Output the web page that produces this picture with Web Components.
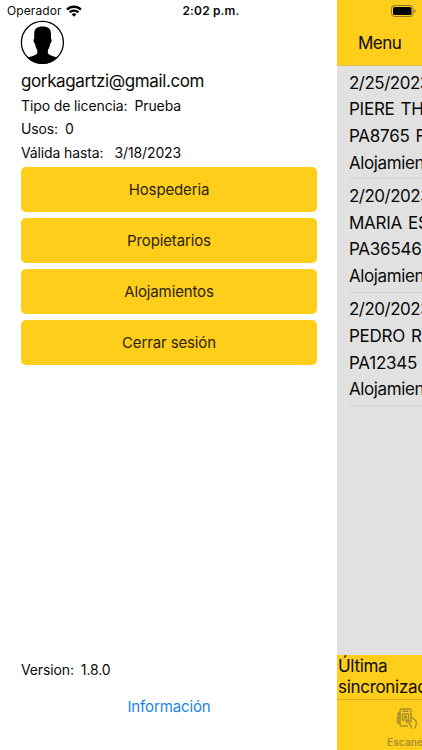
<!DOCTYPE html>
<html lang="es">
<head>
<meta charset="utf-8">
<title>Hospederia</title>
<style>
  :root {
    --accent: #ffce1b;
    --link: #1a82e6;
    --dim: #e1e1e1;
  }
  html, body {
    margin: 0;
    height: 100%;
    overflow: hidden;
    background: #fff;
    color: #0a0a0a;
    font-family: Inter, "Liberation Sans", sans-serif;
  }
</style>
</head>
<body>
<app-shell>
  <status-bar slot="status" carrier="Operador" time="2:02 p.m."></status-bar>
  <side-drawer slot="drawer">
    <user-avatar slot="profile"></user-avatar>
    <license-info slot="profile" email="gorkagartzi@gmail.com" type="Prueba" uses="0" until="3/18/2023"></license-info>
    <drawer-button>Hospederia</drawer-button>
    <drawer-button>Propietarios</drawer-button>
    <drawer-button>Alojamientos</drawer-button>
    <drawer-button>Cerrar sesión</drawer-button>
    <span slot="version">1.8.0</span>
    <span slot="link">Información</span>
  </side-drawer>
  <guest-page heading="Menu">
    <guest-entry date="2/25/2023" name="PIERE TH" doc="PA8765 F" place="Alojamiento"></guest-entry>
    <guest-entry date="2/20/2023" name="MARIA ES" doc="PA36546" place="Alojamiento"></guest-entry>
    <guest-entry date="2/20/2023" name="PEDRO R" doc="PA12345" place="Alojamiento"></guest-entry>
    <scan-tab slot="tab">Escanear</scan-tab>
  </guest-page>
</app-shell>

<script>
/** <app-shell> — drawer pushed in from the left, page cut off at the right edge */
class AppShell extends HTMLElement {
  connectedCallback() {
    this.attachShadow({ mode: "open" }).innerHTML = `
      <style>
        :host { display: grid; grid-template-columns: 337px 85px; height: 750px; width: 422px; position: relative; overflow: hidden; }
        /* the status bar floats over both columns */
        ::slotted(status-bar) { position: absolute; top: 0; left: 0; right: 0; z-index: 2; }
      </style>
      <slot name="status"></slot>
      <slot name="drawer"></slot>
      <slot></slot>
    `;
  }
}

class StatusBar extends HTMLElement {
  connectedCallback() {
    this.attachShadow({ mode: "open" }).innerHTML = `
      <style>
        :host { display: grid; grid-template-columns: 1fr auto 1fr; align-items: center; height: 22px; padding: 0 7px; font-size: 12px; line-height: 22px; }
        .left { display: flex; align-items: center; gap: 4px; letter-spacing: 0.1px; }
        .time { font-weight: 600; letter-spacing: 0.15px; }
        .right { display: flex; justify-content: flex-end; margin-right: -7px; padding-right: 5px; }
        svg { display: block; }
      </style>
      <div class="left">
        <span>${this.getAttribute("carrier")}</span>
        <svg width="16" height="12" viewBox="0 0 16 12" fill="none" stroke="#000" stroke-width="2.4">
          <path d="M1.1 4.6a9.9 9.9 0 0 1 13.8 0M3.7 7.4a6.2 6.2 0 0 1 8.6 0"/>
          <path d="M8 11.8 5.6 9.3a3.5 3.5 0 0 1 4.8 0z" fill="#000" stroke="none"/>
        </svg>
      </div>
      <span class="time">${this.getAttribute("time")}</span>
      <div class="right">
        <svg width="26" height="12" viewBox="0 0 26 12">
          <rect x=".5" y=".5" width="21.5" height="11" rx="3" fill="none" stroke="#8f7723"/>
          <rect x="2" y="2" width="18.5" height="8" rx="1.5"/>
          <path d="M23.4 4v4q1.2-.6 1.2-2t-1.2-2" fill="#8f7723"/>
        </svg>
      </div>
    `;
  }
}

class UserAvatar extends HTMLElement {
  connectedCallback() {
    this.attachShadow({ mode: "open" }).innerHTML = `
      <style>
        :host { display: block; width: 44px; height: 44px; margin-left: -1px; }
        svg { display: block; }
      </style>
      <svg width="45" height="45" viewBox="0 0 45 45">
        <circle cx="22.4" cy="22.4" r="21" fill="#fff" stroke="#000" stroke-width="1.3"/>
        <path d="M22.6 6.600c5.600 0 8.400 1.800 8.400 7.800v4.400c1.200.4.700 4-.8 5-.5 2.800-1.100 4.700-2.300 6.200v3.500c2.400 2.600 6.400 2.600 9.300 4.300a21 21 0 0 1-29.600 0c2.900-1.700 7.300-1.700 9.700-4.300V30c-1.200-1.500-1.800-3.400-2.300-6.200-1.500-1-2-4.600-.8-5v-4.400c0-6 2.800-7.800 8.400-7.800z"/>
      </svg>
    `;
  }
}

class LicenseInfo extends HTMLElement {
  connectedCallback() {
    const at = n => this.getAttribute(n);
    this.attachShadow({ mode: "open" }).innerHTML = `
      <style>
        :host { display: block; font-size: 14px; line-height: 23.5px; letter-spacing: -0.12px; }
        .email { font-size: 17px; line-height: 24.5px; padding-top: 5px; letter-spacing: -0.38px; }
        .row { display: flex; gap: 7px; }
        .row.wide { gap: 11px; }
      </style>
      <div class="email">${at("email")}</div>
      <div class="row"><span>Tipo de licencia:</span><span>${at("type")}</span></div>
      <div class="row"><span>Usos:</span><span>${at("uses")}</span></div>
      <div class="row wide"><span>Válida hasta:</span><span>${at("until")}</span></div>
    `;
  }
}

class DrawerButton extends HTMLElement {
  connectedCallback() {
    this.attachShadow({ mode: "open" }).innerHTML = `
      <style>
        :host { display: block; }
        button {
          display: block; width: 100%; height: 45px; padding: 0; border: 0; border-radius: 5px;
          background: var(--accent); color: #2a240f; font: inherit; font-size: 15px; letter-spacing: -0.13px;
        }
      </style>
      <button><slot></slot></button>
    `;
  }
}

class SideDrawer extends HTMLElement {
  connectedCallback() {
    this.attachShadow({ mode: "open" }).innerHTML = `
      <style>
        :host { display: flex; flex-direction: column; box-sizing: border-box; height: 750px; padding: 20px 20px 32px 21px; background: #fff; }
        nav { display: flex; flex-direction: column; gap: 6px; margin-top: 3px; }
        footer { margin-top: auto; font-size: 14px; letter-spacing: -0.13px; }
        .version { display: flex; gap: 7px; line-height: 20px; }
        .link { text-align: center; color: var(--link); font-size: 15px; line-height: 22px; margin-top: 16px; }
      </style>
      <slot name="profile"></slot>
      <nav><slot></slot></nav>
      <footer>
        <div class="version"><span>Version:</span><slot name="version"></slot></div>
        <div class="link"><slot name="link"></slot></div>
      </footer>
    `;
  }
}

class GuestEntry extends HTMLElement {
  connectedCallback() {
    const rows = ["date", "name", "doc", "place"].map(n => `<div class="${n}">${this.getAttribute(n)}</div>`).join("");
    this.attachShadow({ mode: "open" }).innerHTML = `
      <style>
        :host { display: block; box-sizing: border-box; height: 113.3px; padding-top: 3.5px; border-bottom: 1px solid #cfcfcf; font-size: 17px; line-height: 26.8px; white-space: nowrap; word-spacing: 1.4px; letter-spacing: -0.25px; }
        .date { letter-spacing: -0.5px; }
        .place { letter-spacing: -0.4px; }
      </style>
      ${rows}
    `;
  }
}

class ScanTab extends HTMLElement {
  connectedCallback() {
    this.attachShadow({ mode: "open" }).innerHTML = `
      <style>
        :host { display: flex; flex-direction: column; width: 54px; color: #a98e2c; font-size: 10px; font-weight: 600; line-height: 12px; letter-spacing: 0.15px; }
        svg { display: block; margin: 8px 0 6px 9px; }
      </style>
      <svg width="22" height="22" viewBox="0 0 22 22" fill="none" stroke="currentColor" stroke-width="1.4" stroke-linecap="round" stroke-linejoin="round">
        <path d="M15 8.5V2.5Q15 1 13.5 1H5.500Q4 1 4 2.500v14Q4 18 5.500 18h6M7 3.300h5"/>
        <path d="M4 5H2v2h2M4 9H1.500v2H4M4 13H1.500v2H4"/>
        <path d="M6.500 6h6v6h-6zM8.700 8.200h1.600v1.600H8.700z"/>
        <path d="M15 8.500v5.500l-3-1.500q-1.800-.5-1.800 1l4 2.800 1.300 4M15 9l4.500 3.500q1 1 .8 2.500l-.5 3-1 2"/>
      </svg>
      <slot></slot>
    `;
  }
}

/** <guest-page> — list page behind the drawer; greyed while the drawer is open */
class GuestPage extends HTMLElement {
  connectedCallback() {
    this.attachShadow({ mode: "open" }).innerHTML = `
      <style>
        :host { display: flex; flex-direction: column; height: 750px; background: var(--dim); overflow: hidden; }
        header { box-sizing: border-box; height: 66px; padding: 32px 0 0 21px; background: var(--accent); border-bottom: 1px solid #e2c050; font-size: 17px; line-height: 23px; letter-spacing: -0.5px; }
        main { flex: 1; padding-left: 12px; }
        .sync { box-sizing: border-box; background: var(--accent); height: 44px; padding: 1px 0 0 1px; font-size: 17px; line-height: 20.5px; letter-spacing: -0.3px; }
        .tabs { box-sizing: border-box; height: 51px; padding-left: 50px; background: var(--accent); border-top: 1px solid #d5ad20; }
      </style>
      <header>${this.getAttribute("heading")}</header>
      <main><slot></slot></main>
      <div class="sync">Última<br>sincronización</div>
      <div class="tabs"><slot name="tab"></slot></div>
    `;
  }
}

customElements.define("app-shell", AppShell);
customElements.define("status-bar", StatusBar);
customElements.define("user-avatar", UserAvatar);
customElements.define("license-info", LicenseInfo);
customElements.define("drawer-button", DrawerButton);
customElements.define("side-drawer", SideDrawer);
customElements.define("guest-entry", GuestEntry);
customElements.define("scan-tab", ScanTab);
customElements.define("guest-page", GuestPage);
</script>
</body>
</html>
